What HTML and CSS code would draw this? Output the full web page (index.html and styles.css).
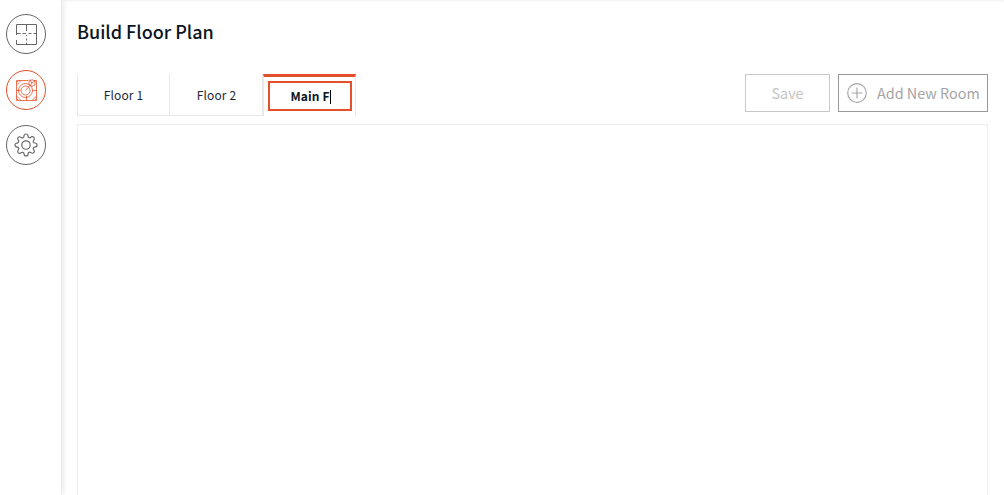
FILE: index.html
```html
<!DOCTYPE html>
<html lang="en">
<head>
<meta charset="utf-8">
<title>Build Floor Plan</title>
<link rel="stylesheet" href="styles.css">
</head>
<body>
<div class="app">
  <nav class="sidebar">
    <a class="nav-btn">
      <svg viewBox="0 0 38 38" width="38" height="38" class="ico"><path d="M9.500 20V9.500h20v20h-20V25M19.500 9.500v6.500M19.500 20v1M19.500 23.500v2M19.500 27.500v2M9.500 18.500h4M15.500 18.500h3.500M21.500 18.500h3M26.500 18.500h3"/></svg>
    </a>
    <a class="nav-btn active">
      <svg viewBox="0 0 38 38" width="38" height="38" class="ico ico-plan"><path d="M9.500 9.500h12M27 9.500h2.500v20h-20v-20M9.500 19.500h4M25 19.500h4.500M19.500 25v4.500M9.500 14l4.500-4.500M9.500 11.500l2-2M9.500 25l4.500 4.500M9.500 27.500l2 2M29.500 25L25 29.500M29.500 27.500l-2 2"/><circle cx="18.500" cy="19.500" r="7"/><circle cx="18.500" cy="19.500" r="4.500"/><circle cx="25" cy="12" r="3.200"/><path d="M18.500 19.500L25 12M22.500 8.500l2.500 3.500 3.500-2.500"/></svg>
    </a>
    <a class="nav-btn">
      <svg viewBox="0 0 24 24" width="24" height="24" class="ico ico-gear"><circle cx="12" cy="12" r="4.200"/><path d="M19.400 15a1.650 1.650 0 0 0 .33 1.820l.06.06a2 2 0 0 1 0 2.830 2 2 0 0 1-2.830 0l-.06-.06a1.650 1.650 0 0 0-1.820-.33 1.650 1.650 0 0 0-1 1.510V21a2 2 0 0 1-2 2 2 2 0 0 1-2-2v-.09A1.650 1.650 0 0 0 9 19.400a1.650 1.650 0 0 0-1.820.33l-.06.06a2 2 0 0 1-2.830 0 2 2 0 0 1 0-2.830l.06-.06a1.650 1.650 0 0 0 .33-1.820 1.650 1.650 0 0 0-1.510-1H3a2 2 0 0 1-2-2 2 2 0 0 1 2-2h.09A1.650 1.650 0 0 0 4.600 9a1.650 1.650 0 0 0-.33-1.820l-.06-.06a2 2 0 0 1 0-2.830 2 2 0 0 1 2.830 0l.06.06a1.650 1.650 0 0 0 1.820.33H9a1.650 1.650 0 0 0 1-1.510V3a2 2 0 0 1 2-2 2 2 0 0 1 2 2v.09a1.650 1.650 0 0 0 1 1.510 1.650 1.650 0 0 0 1.820-.33l.06-.06a2 2 0 0 1 2.830 0 2 2 0 0 1 0 2.830l-.06.06a1.650 1.650 0 0 0-.33 1.820V9a1.650 1.650 0 0 0 1.510 1H21a2 2 0 0 1 2 2 2 2 0 0 1-2 2h-.09a1.650 1.650 0 0 0-1.510 1z"/></svg>
    </a>
  </nav>
  <main class="content">
    <h1 class="title">Build Floor Plan</h1>
    <div class="toolbar">
      <div class="tabs">
        <div class="tab">Floor 1</div>
        <div class="tab">Floor 2</div>
        <div class="tab tab-active"><div class="tab-input"><span class="tab-text">Main F</span><i class="caret"></i></div></div>
      </div>
      <div class="actions">
        <button class="btn btn-save">Save</button>
        <button class="btn btn-add">
          <svg viewBox="0 0 20 20" width="20" height="20" class="plus"><circle cx="10" cy="10" r="9.300"/><path d="M10 4.500v11M4.500 10h11"/></svg>
          <span class="btn-label">Add New Room</span>
        </button>
      </div>
    </div>
    <section class="canvas"></section>
  </main>
</div>
</body>
</html>
```

FILE: styles.css
```css
* { box-sizing: border-box; }
html, body { margin: 0; height: 100%; overflow: hidden; background: #fff; }
body { font-family: "Noto Sans CJK JP", "Noto Sans", sans-serif; color: #0d1b2a; }
.app { display: flex; height: 495px; box-shadow: inset 0 3px 3px -2px #f0f0f0; }
.sidebar {
  width: 61px; flex: none; background: #fff;
  box-shadow: 2px 0 5px rgba(0,0,0,.1);
  display: flex; flex-direction: column; align-items: flex-start;
  gap: 15.600px; padding: 14px 0 0 6px;
}
.nav-btn {
  width: 40px; height: 40px; border: 1px solid #666; border-radius: 50%;
  display: flex; align-items: center; justify-content: center; color: #666;
}
.nav-btn.active { border-color: #e4502b; color: #e4502b; }
.ico { fill: none; stroke: currentColor; stroke-width: 1; }
.ico-plan { stroke-width: .8; }
.ico-gear { stroke-width: 1.150; }
.content { flex: 1; min-width: 0; padding: 19px 16px 0 16px; display: flex; flex-direction: column; }
.title { margin: 0; font-size: 18px; line-height: 24px; font-weight: 500; color: #0b1522; }
.toolbar { display: flex; justify-content: space-between; margin-top: 31px; height: 42px; }
.tabs { display: flex; }
.tab {
  flex: none; width: 93px; height: 42px; display: flex; align-items: center; justify-content: center;
  font-size: 12px; letter-spacing: .1px; color: #1c2a3a;
  border-right: 1px solid #e8e8e8; border-bottom: 1px solid #e8e8e8; border-left: 1px solid transparent;
  padding-bottom: 1px;
}
.tab:first-child { border-left: 1px solid #e8e8e8; }
.tab-active { border-top: 3px solid #e4502b; border-bottom: none; padding: 4px 3px 5px 4px; border-left-color: #e8e8e8; }
.tab-input {
  flex: none; width: 84px; height: 30px; border: 2px solid #e4502b; display: flex; align-items: center; justify-content: center;
  font-weight: 700; color: #0b1522; font-size: 12px; padding: 0 0 2px 1px;
}
.caret { width: 1px; height: 14px; margin-top: 4px; background: #000; display: block; }
.actions { display: flex; gap: 8px; height: 38px; }
.btn { height: 38px; background: #fff; font-family: inherit; font-size: 14.400px; display: flex; align-items: center; justify-content: flex-start; padding: 0; }
.btn-save { width: 85px; border: 1px solid #c8c8c8; color: #c4c4c4; justify-content: center; padding-bottom: 1px; }
.btn-add { width: 150px; border: 1px solid #999; color: #a5a5a5; gap: 10px; padding-left: 8px; }
.btn-label { padding-bottom: 1px; }
.plus { fill: none; stroke: #a8a8a8; stroke-width: 1.200; flex: none; }
.canvas { margin-top: 8px; flex: 1; border: 1px solid #eee; border-bottom: none; }
```
